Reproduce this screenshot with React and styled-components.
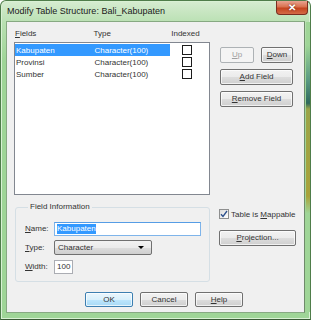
import React from "react";
import styled, { createGlobalStyle } from "styled-components";

const GlobalStyle = createGlobalStyle`
  html, body { margin: 0; padding: 0; background: #ffffff; }
  body { font-family: "Liberation Sans", Arial, sans-serif; }
`;

const Window = styled.div`
  width: 311px;
  height: 320px;
  box-sizing: border-box;
  display: flex;
  flex-direction: column;
  padding: 0 5px 6px 5px;
  border: 1px solid #4f7d4a;
  border-bottom-color: #3a5a36;
  border-radius: 6px 6px 0 0;
  background: linear-gradient(to bottom, #d6ecd1 0px, #b9e0b2 22px, #9fd597 60px, #9fd597 100%);
  box-shadow: inset 0 0 0 1px #d9f1d4;
`;

const TitleBar = styled.div`
  height: 20px;
  display: flex;
  align-items: flex-start;
  justify-content: space-between;
`;

const Title = styled.div`
  font-size: 9px;
  line-height: 9px;
  padding-top: 6px;
  padding-left: 1px;
  color: #1a1a1a;
`;

const CloseButton = styled.div`
  width: 32px;
  height: 14px;
  margin-right: -3px;
  box-sizing: border-box;
  border: 1px solid #7a2d20;
  border-top: none;
  border-radius: 0 0 4px 4px;
  background: linear-gradient(to bottom, #e8a392 0%, #d9714f 45%, #c4441f 55%, #d46a47 100%);
  display: flex;
  align-items: center;
  justify-content: center;
  color: #fff;
  font-size: 10px;
  font-weight: bold;
  text-shadow: 0 0 2px #5a1a10;
`;

const Client = styled.div`
  flex: 1;
  display: flex;
  flex-direction: column;
  background: #f0f0f0;
  border: 1px solid #87a982;
  border-right-color: #6f8a6b;
  padding: 7px 0 0 7px;
  font-size: 8px;
  color: #333;
  position: relative;
`;

const RightEdge = styled.div`
  position: absolute;
  right: -6px;
  top: 0;
  bottom: 0;
  width: 4px;
  background: linear-gradient(to bottom, #9fd597 0%, #9fd597 8%, #5a9a82 20%, #2f6a5c 28%, #9aa448 30%, #a8a23a 60%, #9fd597 66%, #9fd597 100%);
`;

const TopSection = styled.div`
  display: flex;
  gap: 10px;
`;

const ListColumn = styled.div`
  width: 196px;
  display: flex;
  flex-direction: column;
`;

const HeaderRow = styled.div`
  height: 13px;
  display: flex;
  align-items: flex-start;
  line-height: 10px;
`;

const HeaderCell = styled.div`
  width: ${(p) => p.$w}px;
  padding-left: ${(p) => p.$pl || 0}px;
`;

const ListBox = styled.div`
  height: 153px;
  box-sizing: border-box;
  border: 1px solid #828790;
  background: #fff;
  padding: 1px 0 0 0;
`;

const Row = styled.div`
  height: 12px;
  display: flex;
  align-items: center;
`;

const Cells = styled.div`
  width: 155px;
  height: 12px;
  display: flex;
  align-items: center;
  background: ${(p) => (p.$selected ? "#3399ff" : "transparent")};
  color: ${(p) => (p.$selected ? "#fff" : "#333")};
`;

const Cell = styled.div`
  width: ${(p) => p.$w}px;
  padding-left: ${(p) => p.$pl || 0}px;
  white-space: nowrap;
`;

const Box = styled.div`
  width: 10px;
  height: 10px;
  box-sizing: border-box;
  border: 1px solid #1c1c1c;
  background: #fff;
  margin-left: 12px;
`;

const ButtonColumn = styled.div`
  padding-top: 18px;
  display: flex;
  flex-direction: column;
  gap: 6px;
`;

const ButtonPair = styled.div`
  display: flex;
  gap: 7px;
`;

const Button = styled.div`
  width: ${(p) => p.$w}px;
  height: ${(p) => p.$h || 16}px;
  box-sizing: border-box;
  border: 1px solid ${(p) => (p.$disabled ? "#adb2b5" : p.$default ? "#3c7fb1" : "#707070")};
  border-radius: 2px;
  background: ${(p) =>
    p.$disabled
      ? "#f4f4f4"
      : p.$default
      ? "linear-gradient(to bottom, #eaf6fd 0%, #d9f0fc 50%, #bee6fd 51%, #a7d9f5 100%)"
      : "linear-gradient(to bottom, #f2f2f2 0%, #ebebeb 50%, #dddddd 51%, #cfcfcf 100%)"};
  box-shadow: ${(p) => (p.$disabled ? "none" : "inset 0 0 0 1px rgba(255,255,255,0.7)")};
  color: ${(p) => (p.$disabled ? "#a0a0a0" : "#333")};
  display: flex;
  align-items: center;
  justify-content: center;
  line-height: 10px;
`;

const MiddleSection = styled.div`
  display: flex;
  margin-top: 7px;
  gap: 9px;
`;

const Group = styled.fieldset`
  margin: 0 0 0 1px;
  width: 195px;
  box-sizing: border-box;
  border: 1px solid #d5dfe5;
  border-radius: 3px;
  padding: 9px 0 7px 9px;
  display: flex;
  flex-direction: column;
  gap: 4px;
`;

const Legend = styled.legend`
  padding: 0 2px;
  margin-left: 3px;
  line-height: 10px;
`;

const FieldRow = styled.div`
  display: flex;
  align-items: center;
  height: 15px;
`;

const FieldLabel = styled.div`
  width: 29px;
`;

const TextBox = styled.div`
  width: ${(p) => p.$w}px;
  height: 14px;
  box-sizing: border-box;
  border: 1px solid ${(p) => (p.$focused ? "#7eb4ea" : "#abadb3")};
  border-top-color: ${(p) => (p.$focused ? "#569de5" : "#abadb3")};
  background: #fff;
  display: flex;
  align-items: center;
  padding-left: 2px;
`;

const Highlight = styled.span`
  background: #3399ff;
  color: #fff;
  line-height: 10px;
`;

const Select = styled.div`
  width: 98px;
  height: 15px;
  box-sizing: border-box;
  border: 1px solid #707070;
  border-radius: 2px;
  background: linear-gradient(to bottom, #f2f2f2 0%, #ebebeb 50%, #dddddd 51%, #cfcfcf 100%);
  display: flex;
  align-items: center;
  justify-content: space-between;
  padding: 0 7px 0 3px;
`;

const Arrow = styled.div`
  width: 0;
  height: 0;
  border-left: 3px solid transparent;
  border-right: 3px solid transparent;
  border-top: 3px solid #000;
`;

const SidePanel = styled.div`
  padding-top: 7px;
  display: flex;
  flex-direction: column;
  gap: 11px;
`;

const CheckRow = styled.div`
  display: flex;
  align-items: center;
  gap: 2px;
  height: 10px;
`;

const CheckBox = styled.div`
  width: 10px;
  height: 10px;
  box-sizing: border-box;
  border: 1px solid #8e8f8f;
  background: linear-gradient(135deg, #dcdcdc, #fff);
  display: flex;
  align-items: center;
  justify-content: center;
`;

const Footer = styled.div`
  display: flex;
  gap: 7px;
  margin-top: 10px;
  padding-left: 71px;
`;

export default function App() {
  const rows = [
    { name: "Kabupaten", type: "Character(100)", selected: true },
    { name: "Provinsi", type: "Character(100)" },
    { name: "Sumber", type: "Character(100)" },
  ];

  return (
    <>
      <GlobalStyle />
      <Window>
        <TitleBar>
          <Title>Modify Table Structure: Bali_Kabupaten</Title>
          <CloseButton>✕</CloseButton>
        </TitleBar>
        <Client>
          <RightEdge />
          <TopSection>
            <ListColumn>
              <HeaderRow>
                <HeaderCell $w={79} $pl={1}>
                  <u>F</u>ields
                </HeaderCell>
                <HeaderCell $w={78}>Type</HeaderCell>
                <HeaderCell $w={39}>Indexed</HeaderCell>
              </HeaderRow>
              <ListBox>
                {rows.map((r) => (
                  <Row key={r.name}>
                    <Cells $selected={r.selected}>
                      <Cell $w={79} $pl={1}>
                        {r.name}
                      </Cell>
                      <Cell $w={76}>{r.type}</Cell>
                    </Cells>
                    <Box />
                  </Row>
                ))}
              </ListBox>
            </ListColumn>
            <ButtonColumn>
              <ButtonPair>
                <Button $w={34} $disabled>
                  <span><u>U</u>p</span>
                </Button>
                <Button $w={32}>
                  <span><u>D</u>own</span>
                </Button>
              </ButtonPair>
              <Button $w={73}>
                <span><u>A</u>dd Field</span>
              </Button>
              <Button $w={73}>
                <span><u>R</u>emove Field</span>
              </Button>
            </ButtonColumn>
          </TopSection>

          <MiddleSection>
            <Group>
              <Legend>Field Information</Legend>
              <FieldRow>
                <FieldLabel>
                  <u>N</u>ame:
                </FieldLabel>
                <TextBox $w={147} $focused>
                  <Highlight>Kabupaten</Highlight>
                </TextBox>
              </FieldRow>
              <FieldRow>
                <FieldLabel>
                  <u>T</u>ype:
                </FieldLabel>
                <Select>
                  <span>Character</span>
                  <Arrow />
                </Select>
              </FieldRow>
              <FieldRow>
                <FieldLabel>
                  <u>W</u>idth:
                </FieldLabel>
                <TextBox $w={19}>100</TextBox>
              </FieldRow>
            </Group>
            <SidePanel>
              <CheckRow>
                <CheckBox>
                  <svg width="8" height="8" viewBox="0 0 8 8">
                    <path d="M1 4.2 L3 6.5 L7 1" fill="none" stroke="#2b4f8c" strokeWidth="1.3" />
                  </svg>
                </CheckBox>
                <span>
                  Table is <u>M</u>appable
                </span>
              </CheckRow>
              <Button $w={77}>
                <span><u>P</u>rojection...</span>
              </Button>
            </SidePanel>
          </MiddleSection>

          <Footer>
            <Button $w={48} $h={15} $default>
              OK
            </Button>
            <Button $w={48} $h={15}>
              Cancel
            </Button>
            <Button $w={48} $h={15}>
              <span><u>H</u>elp</span>
            </Button>
          </Footer>
        </Client>
      </Window>
    </>
  );
}
